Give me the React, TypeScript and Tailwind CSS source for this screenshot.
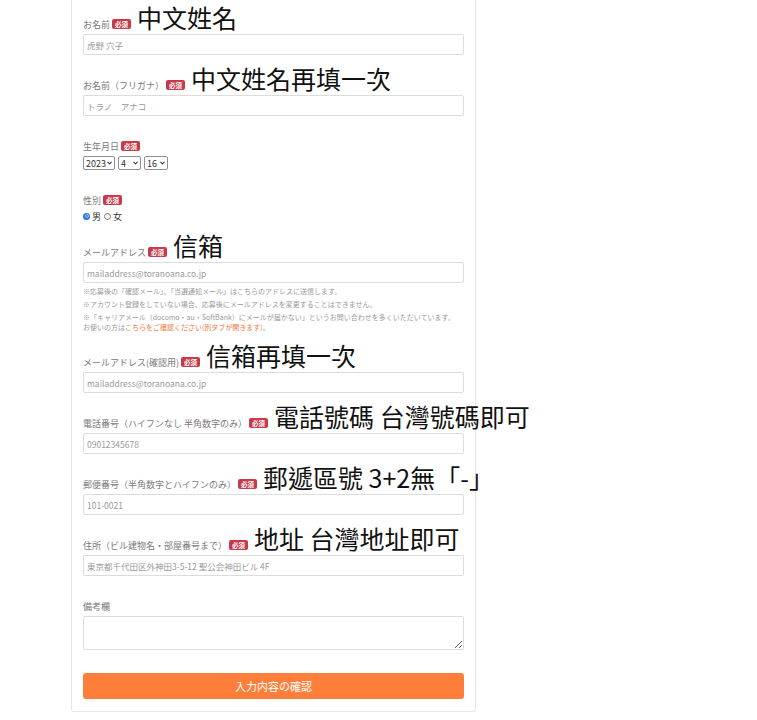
import type { ReactNode } from 'react';
import { ChevronDown } from 'lucide-react';

const jp = "font-['Noto_Sans_CJK_JP','Liberation_Sans',sans-serif]";
const tc = "font-['Noto_Sans_CJK_TC','Noto_Sans_CJK_JP',sans-serif]";

const Badge = () => (
  <span className="ml-[2px] inline-flex h-[10px] items-center rounded-[2px] bg-[#c8394a] px-[3px] text-[6.5px] font-bold leading-none text-white">
    必須
  </span>
);

type FieldProps = {
  label: string;
  required?: boolean;
  memo?: string;
  className?: string;
  children: ReactNode;
};

// ラベル行 + 入力欄。memo は手書きの補足（繁体字）
const Field = ({ label, required, memo, className = 'mb-[23px]', children }: FieldProps) => (
  <div className={className}>
    <div className="mb-[3px] flex h-[14px] items-center text-[9px] leading-none text-[#7a7a7a]">
      <span>{label}</span>
      {required && <Badge />}
      {memo && (
        <span className="relative h-full">
          <span className={`absolute bottom-[1px] left-[6px] whitespace-nowrap text-[25px] leading-none text-[#111] ${tc}`}>
            {memo}
          </span>
        </span>
      )}
    </div>
    {children}
  </div>
);

const TextInput = ({ placeholder }: { placeholder: string }) => (
  <input
    type="text"
    placeholder={placeholder}
    className="block h-[21px] w-full rounded-[2px] border border-[#dcdcdc] bg-white px-[3px] text-[8.5px] text-[#333] outline-none placeholder:text-[#9a9a9a]"
  />
);

const DateSelect = ({ value, width }: { value: string; width: string }) => (
  <div className={`relative ${width}`}>
    <select
      defaultValue={value}
      className="block h-[14px] w-full appearance-none rounded-[2px] border border-[#8f8f8f] bg-white pl-[2px] text-[9px] leading-none text-[#333]"
    >
      <option value={value}>{value}</option>
    </select>
    <ChevronDown
      strokeWidth={3.5}
      className="pointer-events-none absolute right-[2px] top-1/2 h-[7px] w-[7px] -translate-y-1/2 text-[#333]"
    />
  </div>
);

export default function App() {
  return (
    <div className={`min-h-[720px] bg-white ${jp}`}>
      <div className="ml-[71px] w-[405px] rounded-b-[3px] border border-t-0 border-[#e6e6e6] px-[11px] pb-[12px] pt-[17px]">
        <Field label="お名前" required memo="中文姓名">
          <TextInput placeholder="虎野 穴子" />
        </Field>

        <Field label="お名前（フリガナ）" required memo="中文姓名再填一次">
          <TextInput placeholder="トラノ　アナコ" />
        </Field>

        <Field label="生年月日" required>
          <div className="flex gap-[3px]">
            <DateSelect value="2023" width="w-[32px]" />
            <DateSelect value="4" width="w-[23px]" />
            <DateSelect value="16" width="w-[24px]" />
          </div>
        </Field>

        <Field label="性別" required>
          <div className="flex h-[12px] items-center text-[9px] leading-none text-[#333]">
            <span className="flex h-[7px] w-[7px] items-center justify-center rounded-full bg-[#2b78dc]">
              <span className="h-[4px] w-[4px] rounded-full border border-[#9cc3f0] bg-[#2b78dc]" />
            </span>
            <span className="ml-[2px]">男</span>
            <span className="ml-[3px] h-[7px] w-[7px] rounded-full border border-[#777]" />
            <span className="ml-[2px]">女</span>
          </div>
        </Field>

        <Field label="メールアドレス" required memo="信箱">
          <TextInput placeholder="mailaddress@toranoana.co.jp" />
          <div className="text-[7px] leading-[10px] text-[#9a9a9a]">
            <p className="mt-[3px]">※応募後の「確認メール」、「当選通知メール」はこちらのアドレスに送信します。</p>
            <p className="mt-[3px]">※アカウント登録をしていない場合、応募後にメールアドレスを変更することはできません。</p>
            <p className="mt-[3px]">
              ※「キャリアメール（docomo・au・SoftBank）にメールが届かない」というお問い合わせを多くいただいています。
              <br />
              お使いの方は<span className="text-[#ee7a42]">こちらをご確認ください(別タブが開きます)</span>。
            </p>
          </div>
        </Field>

        <Field label="メールアドレス(確認用)" required memo="信箱再填一次">
          <TextInput placeholder="mailaddress@toranoana.co.jp" />
        </Field>

        <Field label="電話番号（ハイフンなし 半角数字のみ）" required memo="電話號碼 台灣號碼即可">
          <TextInput placeholder="09012345678" />
        </Field>

        <Field label="郵便番号（半角数字とハイフンのみ）" required memo="郵遞區號 3+2無「-」">
          <TextInput placeholder="101-0021" />
        </Field>

        <Field label="住所（ビル建物名・部屋番号まで）" required memo="地址 台灣地址即可">
          <TextInput placeholder="東京都千代田区外神田3-5-12 聖公会神田ビル 4F" />
        </Field>

        <Field label="備考欄">
          <textarea className="block h-[34px] w-full rounded-[2px] border border-[#dcdcdc] bg-white outline-none" />
        </Field>

        <button
          type="button"
          className="flex h-[26px] w-full items-center justify-center rounded-[3px] bg-[#ff7f3a] text-[11px] text-white"
        >
          入力内容の確認
        </button>
      </div>
    </div>
  );
}
